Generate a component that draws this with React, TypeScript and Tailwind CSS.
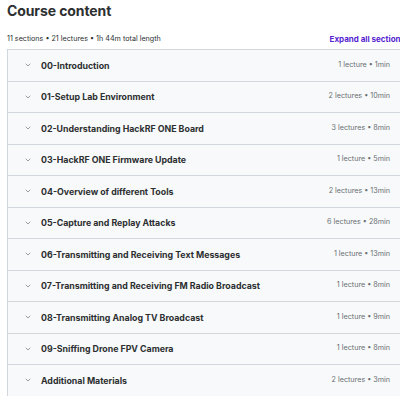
import { ChevronDown } from 'lucide-react';

const sections = [
  { title: '00-Introduction', meta: '1 lecture • 1min' },
  { title: '01-Setup Lab Environment', meta: '2 lectures • 10min' },
  { title: '02-Understanding HackRF ONE Board', meta: '3 lectures • 8min' },
  { title: '03-HackRF ONE Firmware Update', meta: '1 lecture • 5min' },
  { title: '04-Overview of different Tools', meta: '2 lectures • 13min' },
  { title: '05-Capture and Replay Attacks', meta: '6 lectures • 28min' },
  { title: '06-Transmitting and Receiving Text Messages', meta: '1 lecture • 13min' },
  { title: '07-Transmitting and Receiving FM Radio Broadcast', meta: '1 lecture • 8min' },
  { title: '08-Transmitting Analog TV Broadcast', meta: '1 lecture • 9min' },
  { title: '09-Sniffing Drone FPV Camera', meta: '1 lecture • 8min' },
  { title: 'Additional Materials', meta: '2 lectures • 3min' },
];

export default function App() {
  return (
    <div className="w-[400px] h-[396px] overflow-hidden bg-white text-[#2d2f31]" style={{ fontFamily: 'Inter, "Noto Sans", sans-serif' }}>
      <div className="w-[412px] pl-[7px] pt-[1px]">
        <h2 className="text-[14px] font-bold leading-[20px] tracking-[-0.1px]">Course content</h2>
        <div className="flex items-end justify-between mt-[12px] h-[12px] pr-[7px]">
          <span className="text-[7.2px] text-[#2d2f31]">11 sections • 21 lectures • 1h 44m total length</span>
          <span className="text-[8px] font-bold text-[#5624d0] whitespace-nowrap">Expand all sections</span>
        </div>
        <div className="mt-[4px] border-t border-l border-[#d1d7dc]">
          {sections.map((s) => (
            <div key={s.title} className="flex items-center h-[31.5px] bg-[#f7f9fa] border-b border-[#d1d7dc] pl-[16px] pr-[22px]">
              <ChevronDown className="w-[8px] h-[8px] text-[#6a6f73]" strokeWidth={2} />
              <span className="ml-[9px] text-[8.8px] font-bold flex-1">{s.title}</span>
              <span className="text-[7.2px] text-[#6a6f73]">{s.meta}</span>
            </div>
          ))}
        </div>
      </div>
    </div>
  );
}
